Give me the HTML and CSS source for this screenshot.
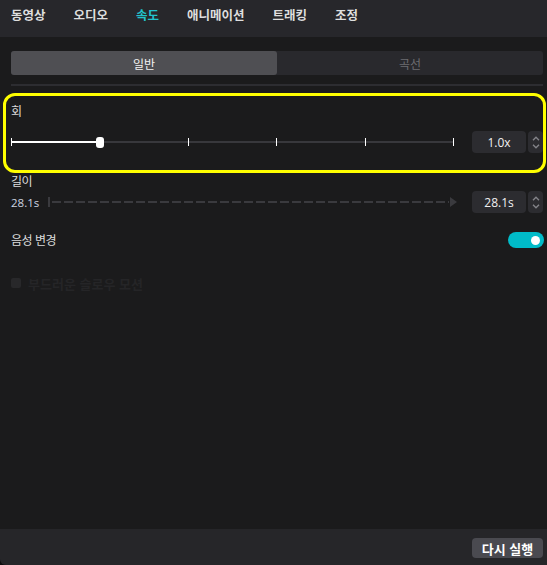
FILE: index.html
```html
<!DOCTYPE html>
<html lang="ko">
<head>
<meta charset="utf-8">
<title>속도</title>
<link rel="stylesheet" href="styles.css">
</head>
<body>
<div class="app">
  <nav class="tabs">
    <span class="tab">동영상</span>
    <span class="tab">오디오</span>
    <span class="tab active">속도</span>
    <span class="tab">애니메이션</span>
    <span class="tab">트래킹</span>
    <span class="tab">조정</span>
  </nav>
  <main class="content">
    <div class="seg">
      <div class="seg-item on">일반</div>
      <div class="seg-item">곡선</div>
    </div>
    <div class="divider"></div>

    <section class="speed">
      <div class="label">회</div>
      <div class="row">
        <div class="slider">
          <span class="tick"></span><span class="tick"></span><span class="tick"></span>
          <span class="tick"></span><span class="tick"></span><span class="tick"></span>
          <span class="thumb"></span>
        </div>
        <div class="num">1.0x</div>
        <div class="spin">
          <svg width="8" height="5" viewBox="0 0 8 5"><path d="M1 4.2 L4 1.2 L7 4.2" fill="none" stroke="#85858a" stroke-width="1.3"/></svg>
          <svg width="8" height="5" viewBox="0 0 8 5"><path d="M1 0.8 L4 3.8 L7 0.8" fill="none" stroke="#85858a" stroke-width="1.3"/></svg>
        </div>
      </div>
    </section>

    <section class="len">
      <div class="label">길이</div>
      <div class="row">
        <span class="time">28.1s</span>
        <div class="track">
          <span class="bar-tick"></span>
          <span class="dash"></span>
          <span class="arrow"></span>
        </div>
        <div class="num">28.1s</div>
        <div class="spin">
          <svg width="8" height="5" viewBox="0 0 8 5"><path d="M1 4.2 L4 1.2 L7 4.2" fill="none" stroke="#85858a" stroke-width="1.3"/></svg>
          <svg width="8" height="5" viewBox="0 0 8 5"><path d="M1 0.8 L4 3.8 L7 0.8" fill="none" stroke="#85858a" stroke-width="1.3"/></svg>
        </div>
      </div>
    </section>

    <div class="voice">
      <span class="label">음성 변경</span>
      <span class="toggle"><span class="knob"></span></span>
    </div>

    <div class="smooth">
      <span class="cb"></span>
      <span>부드러운 슬로우 모션</span>
    </div>
  </main>
  <footer class="bottom">
    <button class="btn">다시 실행</button>
  </footer>
  <div class="hl"></div>
</div>
</body>
</html>
```

FILE: styles.css
```css
html, body {
  margin: 0;
  height: 100%;
  background: #0e0e0f;
}
body {
  font-family: "Noto Sans CJK KR", "Noto Sans", sans-serif;
}
.app {
  position: relative;
  height: 565px;
  display: flex;
  flex-direction: column;
  background: #1b1b1c;
  border-bottom-left-radius: 6px;
  overflow: hidden;
}
.tabs {
  flex: none;
  height: 37px;
  background: #27272b;
  display: flex;
  gap: 28px;
  padding-left: 11px;
  align-items: flex-start;
}
.tab {
  font-size: 12.5px;
  font-weight: 700;
  letter-spacing: 0;
  line-height: 16px;
  margin-top: 7px;
  color: #dedede;
}
.tab.active {
  color: #22c2cd;
}
.content {
  flex: 1;
  padding: 14px 4px 0 11px;
  display: flex;
  flex-direction: column;
}
.seg {
  display: flex;
  height: 24px;
  background: #29292d;
  border-radius: 3px;
}
.seg-item {
  flex: 1;
  display: flex;
  align-items: center;
  justify-content: center;
  font-size: 12px;
  color: #6d6d71;
  border-radius: 3px;
}
.seg-item.on {
  background: #4f4f53;
  color: #f2f2f2;
}
.divider {
  height: 2px;
  background: #2d2d31;
  margin-top: 9px;
}
.label {
  font-size: 12px;
  line-height: 16px;
  color: #dcdcdc;
  letter-spacing: -0.5px;
}
.speed .label {
  margin-top: 17px;
  display: block;
}
.row {
  display: flex;
  align-items: center;
  height: 22px;
}
.speed .row {
  margin-top: 12px;
}
.slider {
  flex: 1;
  margin-right: 18px;
  height: 11px;
  position: relative;
  display: flex;
  justify-content: space-between;
  align-items: center;
  background: linear-gradient(to right, #ffffff 0 86px, #38383c 86px) center / 100% 2px no-repeat;
}
.tick {
  width: 1px;
  height: 8px;
  background: #ffffff;
}
.thumb {
  position: absolute;
  left: 85px;
  top: 0;
  width: 8px;
  height: 11px;
  border-radius: 3px;
  background: #ffffff;
}
.num {
  width: 54px;
  height: 22px;
  background: #2c2c30;
  border-radius: 4px;
  display: flex;
  align-items: center;
  justify-content: center;
  font-family: "Open Sans", "Noto Sans", sans-serif;
  font-size: 12px;
  color: #f0f0f0;
}
.spin {
  width: 15px;
  height: 22px;
  margin-left: 2px;
  background: #2c2c30;
  border-radius: 4px;
  display: flex;
  flex-direction: column;
  align-items: center;
  justify-content: center;
  gap: 3px;
}
.spin svg {
  display: block;
}
.len .label {
  margin-top: 20px;
}
.len .row {
  margin-top: 2px;
}
.time {
  width: 27px;
  font-family: "Open Sans", "Noto Sans", sans-serif;
  font-size: 11.5px;
  color: #cdd5e2;
  white-space: nowrap;
}
.track {
  flex: 1;
  display: flex;
  align-items: center;
  margin-left: 10px;
  margin-right: 15px;
}
.bar-tick {
  width: 2px;
  height: 10px;
  background: #3a3a3e;
}
.dash {
  flex: 1;
  height: 2px;
  margin: 0 1px 0 2px;
  background: repeating-linear-gradient(to right, #3a3a3e 0 9px, transparent 9px 12px);
}
.arrow {
  width: 0;
  height: 0;
  border-left: 7px solid #3a3a3e;
  border-top: 5px solid transparent;
  border-bottom: 5px solid transparent;
}
.voice {
  display: flex;
  justify-content: space-between;
  align-items: center;
  height: 16px;
  margin-top: 19px;
}
.toggle {
  width: 36px;
  height: 16px;
  border-radius: 8px;
  background: #00bcc9;
  display: flex;
  align-items: center;
  justify-content: flex-end;
  padding-right: 4px;
  box-sizing: border-box;
  margin-right: -1px;
}
.knob {
  width: 9px;
  height: 9px;
  border-radius: 50%;
  background: #ffffff;
}
.smooth {
  display: flex;
  align-items: center;
  gap: 7px;
  margin-top: 27px;
  height: 16px;
  font-size: 13px;
  font-weight: 700;
  color: #252527;
}
.cb {
  width: 10px;
  height: 10px;
  border-radius: 2px;
  background: #28282a;
}
.bottom {
  flex: none;
  height: 36px;
  background: #262629;
  display: flex;
  justify-content: flex-end;
  align-items: flex-start;
  padding: 9px 4px 0 0;
  box-sizing: border-box;
}
.btn {
  height: 20px;
  width: 71px;
  background: #4a4a50;
  border: 0;
  border-radius: 4px;
  color: #ffffff;
  font-family: inherit;
  font-size: 13px;
  font-weight: 700;
  letter-spacing: 0;
  padding: 0;
}
.hl {
  position: absolute;
  left: 3px;
  top: 93px;
  width: 543px;
  height: 80px;
  border: 3px solid #ffff00;
  border-radius: 12px;
  box-sizing: border-box;
  pointer-events: none;
}
```
